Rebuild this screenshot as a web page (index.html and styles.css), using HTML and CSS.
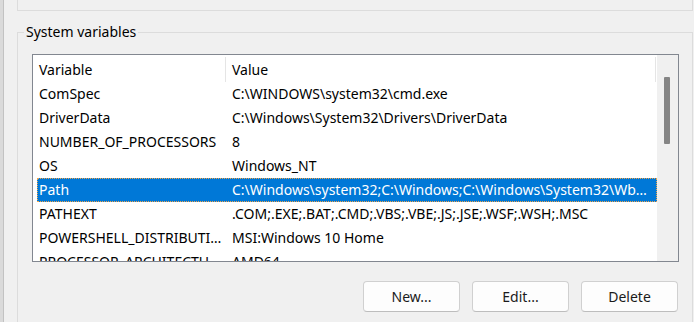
FILE: index.html
```html
<!DOCTYPE html>
<html lang="en">
<head>
    <meta charset="UTF-8">
    <meta name="viewport" content="width=device-width, initial-scale=1.0">
    <title>Environment Variables</title>
    <link rel="stylesheet" href="styles.css">
</head>
<body>
    <div class="behind"></div>

    <div class="dialog">
        <div class="user-box"></div>

        <fieldset class="sys-box">
            <legend>System variables</legend>

            <div class="listbox">
                <div class="list">
                    <div class="head">
                        <div class="cell">Variable</div>
                        <div class="cell">Value</div>
                    </div>
                    <div class="row"><div class="cell">ComSpec</div><div class="cell">C:\WINDOWS\system32\cmd.exe</div></div>
                    <div class="row"><div class="cell">DriverData</div><div class="cell">C:\Windows\System32\Drivers\DriverData</div></div>
                    <div class="row"><div class="cell">NUMBER_OF_PROCESSORS</div><div class="cell">8</div></div>
                    <div class="row"><div class="cell">OS</div><div class="cell">Windows_NT</div></div>
                    <div class="row selected"><div class="cell">Path</div><div class="cell">C:\Windows\system32;C:\Windows;C:\Windows\System32\Wbem;C:\Windows\System32\WindowsPowerShell\v1.0\</div></div>
                    <div class="row"><div class="cell">PATHEXT</div><div class="cell">.COM;.EXE;.BAT;.CMD;.VBS;.VBE;.JS;.JSE;.WSF;.WSH;.MSC</div></div>
                    <div class="row"><div class="cell">POWERSHELL_DISTRIBUTION_CHANNEL</div><div class="cell">MSI:Windows 10 Home</div></div>
                    <div class="row"><div class="cell">PROCESSOR_ARCHITECTURE</div><div class="cell">AMD64</div></div>
                </div>
                <div class="scroll"><div class="thumb"></div></div>
            </div>

            <div class="buttons">
                <button>New...</button>
                <button>Edit...</button>
                <button>Delete</button>
            </div>
        </fieldset>
    </div>
</body>
</html>
```

FILE: styles.css
```css
body { margin: 0; height: 322px; overflow: hidden; display: flex; background: #f0f0f0; font-family: "Noto Sans", "Open Sans", sans-serif; font-size: 14px; color: #000; }

/* window behind the dialog, left edge */
.behind { width: 3px; background: #dadada; border-right: 1px solid #c2c2c2; }

.dialog { flex: 1; padding: 0 1px 0 13px; }
.user-box { height: 10px; border: 1px solid #dcdcdc; border-top: none; }

/* System variables group */
.sys-box { margin: 11px 0 0; padding: 12px 13px 0 14px; border: 1px solid #dcdcdc; min-height: 300px; }
.sys-box legend { margin-left: -8px; padding: 0 2px; height: 20px; line-height: 20px; }

.listbox { height: 206px; display: flex; border: 1px solid #828790; background: #fff; overflow: hidden; }
.list { flex: 1; padding-left: 4px; overflow: hidden; }
.head { display: grid; grid-template-columns: 189px 430px; height: 27px; }
.head .cell { margin-top: 2px; height: 25px; line-height: 25px; border-right: 1px solid #e5e5e5; }
.row { display: grid; grid-template-columns: 189px 430px; height: 24px; line-height: 24px; }
.cell { white-space: nowrap; overflow: hidden; text-overflow: ellipsis; padding: 0 4px 0 2px; }
.cell + .cell { padding-left: 6px; }
.row.selected { background: #0078d7; color: #fff; outline: 1px dotted #f2a54a; outline-offset: -1px; }

.scroll { width: 21px; background: #f0f0f0; }
.thumb { width: 6px; height: 67px; margin: 22px 0 0 7px; background: #858585; border-radius: 1px; }

.buttons { display: flex; justify-content: flex-end; gap: 12px; margin-top: 19px; padding-right: 1px; }
.buttons button { width: 97px; height: 31px; padding: 0; border: 1px solid #d0d0d0; border-bottom-color: #bdbdbd; border-radius: 4px; background: #fdfdfd; font-family: inherit; font-size: 14px; color: #1b1b1b; }
```
